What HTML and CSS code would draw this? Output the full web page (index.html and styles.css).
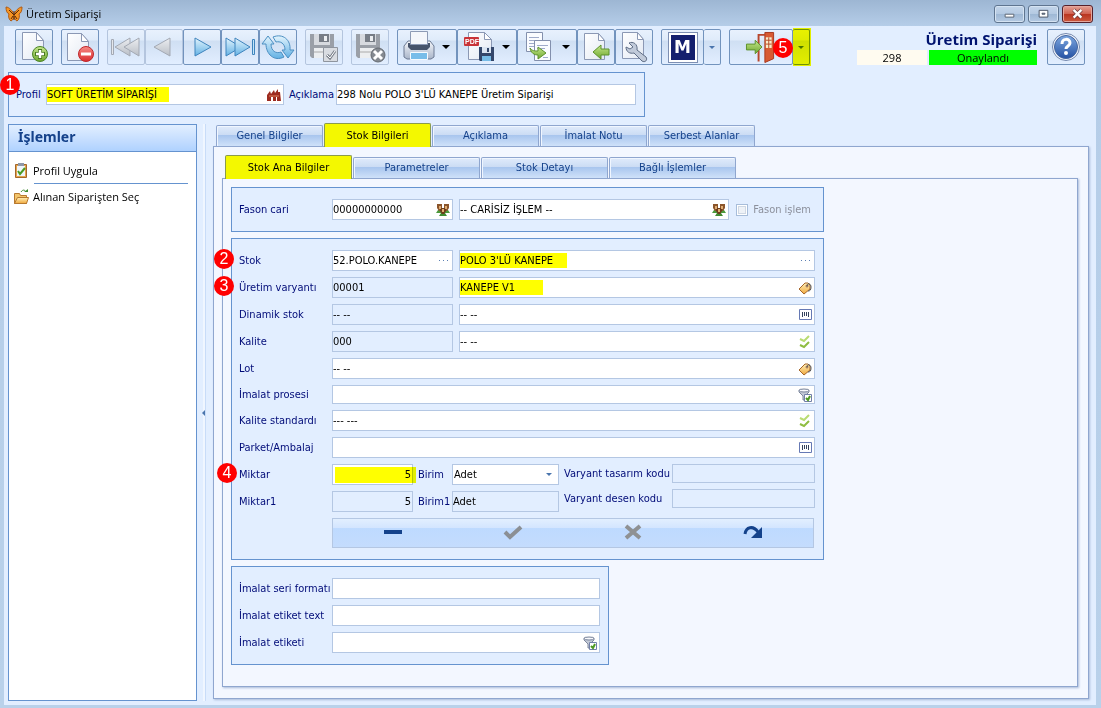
FILE: index.html
```html
<!DOCTYPE html>
<html lang="tr">
<head>
<meta charset="utf-8">
<title>Üretim Siparişi</title>
<link rel="stylesheet" href="styles.css">
</head>
<body>
<svg class="defs" aria-hidden="true">
  <defs>
    <linearGradient id="g-page" x1="0" y1="0" x2="1" y2="1"><stop offset="0" stop-color="#fff"/><stop offset="1" stop-color="#e3e9f3"/></linearGradient>
    <linearGradient id="g-blue" x1="0" y1="0" x2="0" y2="1"><stop offset="0" stop-color="#e3f4fd"/><stop offset="1" stop-color="#62b1e4"/></linearGradient>
    <linearGradient id="g-gray" x1="0" y1="0" x2="0" y2="1"><stop offset="0" stop-color="#eceef1"/><stop offset="1" stop-color="#b9bec6"/></linearGradient>
    <linearGradient id="g-green" x1="0" y1="0" x2="0" y2="1"><stop offset="0" stop-color="#c5e88b"/><stop offset="1" stop-color="#6da62f"/></linearGradient>
    <linearGradient id="g-red" x1="0" y1="0" x2="0" y2="1"><stop offset="0" stop-color="#f78a84"/><stop offset="1" stop-color="#d92c2f"/></linearGradient>
    <linearGradient id="g-help" x1="0" y1="0" x2="0" y2="1"><stop offset="0" stop-color="#7ea8e0"/><stop offset="1" stop-color="#2552a4"/></linearGradient>
    <linearGradient id="g-gold" x1="0" y1="0" x2="0" y2="1"><stop offset="0" stop-color="#fff0b8"/><stop offset="1" stop-color="#f0a83c"/></linearGradient>
    <linearGradient id="g-print" x1="0" y1="0" x2="0" y2="1"><stop offset="0" stop-color="#f5f7fb"/><stop offset="1" stop-color="#a9b5c9"/></linearGradient>
  </defs>
  <symbol id="people" viewBox="0 0 14 14"><path d="M0 10l2-3h3l1 3zM8 10l1-3h3l2 3z" fill="#4b9a3c"/><path d="M3 13l2-3h4l2 3z" fill="#3f8b32"/><path d="M1 1h5v4L5 8H3L1 5zM8 1h5v4l-2 3H9L8 5z" fill="#8b552b"/><path d="M4 5h6v3l-2 3H6L4 8z" fill="#6d3d1c"/><path d="M3 3h2v3H3zM9 3h2v3H9zM6 6h2v3H6z" fill="#e0ad72"/></symbol>
  <symbol id="tag" viewBox="0 0 14 14"><path d="M7 2h3l2 2v4l-6 5-5-5z" fill="url(#g-gold)" stroke="#a5662b"/><circle cx="9" cy="5" r="1" fill="#fff" stroke="#8a5a36"/><path d="M9 5c1-4 4-2 4 1s-1 4-3 4" fill="none" stroke="#555"/></symbol>
  <symbol id="barcode" viewBox="0 0 14 14"><path d="M1.500 1.500h12v10h-12z" fill="#fff" stroke="#6679b4"/><path d="M4.500 4v5M6.500 4v4M8.500 4v4M10.500 4v5" stroke="#34435c"/></symbol>
  <symbol id="checks" viewBox="0 0 14 14"><path d="M2 4l4 2 5-5" fill="none" stroke="#b9dc72" stroke-width="2"/><path d="M2 10l4 2 5-5" fill="none" stroke="#8fbd41" stroke-width="2"/></symbol>
  <symbol id="filter" viewBox="0 0 14 14"><path d="M1 2v2l4 4v4h2V8l4-4V2z" fill="#c3c9d6" stroke="#7d879d"/><ellipse cx="6" cy="2.500" rx="5" ry="1.500" fill="#f8f9fc" stroke="#78839a"/><path d="M6.500 6.500h7v7h-7z" fill="#fff" stroke="#7280a8"/><path d="M8 10l2 2 2-4" fill="none" stroke="#4f9a22" stroke-width="2"/></symbol>
</svg>

<div class="window">
  <header class="titlebar">
    <svg class="logo" viewBox="0 0 18 16"><path d="M9 9C8 5 4 1 1 1c0 4 1 6 3 7-1 2 0 6 2 7 2-1 3-3 3-5 0 2 1 4 3 5 2-1 3-5 2-7 2-1 3-3 3-7-3 0-7 4-8 8z" fill="#f59423" stroke="#b05a12"/><path d="M9 5v9M9 9L4 4M9 9l5-5M8 10l-2 3M10 10l2 3" stroke="#5a2b09"/></svg>
    <span class="caption">Üretim Siparişi</span>
    <div class="winbtns">
      <button class="winbtn" aria-label="Küçült"><svg viewBox="0 0 30 16"><path d="M10.500 8.500h9v3h-9z" fill="#fff" stroke="#5a6372"/></svg></button>
      <button class="winbtn" aria-label="Büyüt"><svg viewBox="0 0 30 16"><path d="M10.500 4.500h9v7h-9z" fill="#fff" stroke="#4b5566"/><path d="M13.500 7.500h3v1h-3z" fill="#b4c9e2" stroke="#4b5566"/></svg></button>
      <button class="winbtn close" aria-label="Kapat"><svg viewBox="0 0 30 16"><path d="M11 4l8 8M19 4l-8 8" stroke="#6b3a3a" stroke-width="4"/><path d="M11 4l8 8M19 4l-8 8" stroke="#fff" stroke-width="2.500"/></svg></button>
    </div>
  </header>

  <div class="client">
    <div class="toolbar">
      <button class="tool" aria-label="Yeni"><svg viewBox="0 0 36 34"><path d="M6.500 2.500h14l7 8v19h-21z" fill="url(#g-page)" stroke="#8b98b4"/><path d="M20.500 2.500v8h7z" fill="#fff" stroke="#8b98b4"/><circle cx="24" cy="24" r="7.500" fill="url(#g-green)" stroke="#4c8528"/><path d="M24 19v10M19 24h10" stroke="#48781f" stroke-width="4"/><path d="M24 20v8M20 24h8" stroke="#fff" stroke-width="2.500"/></svg></button>
      <button class="tool" aria-label="Sil"><svg viewBox="0 0 36 34"><path d="M5.500 3.500h14l7 8v19h-21z" fill="url(#g-page)" stroke="#8b98b4"/><path d="M19.500 3.500v8h7z" fill="#fff" stroke="#8b98b4"/><circle cx="24" cy="24" r="7.500" fill="url(#g-red)" stroke="#c0272b"/><path d="M19 24h10" stroke="#fff" stroke-width="3"/></svg></button>
      <div class="tools">
        <button class="tool off" aria-label="İlk" disabled><svg viewBox="0 0 36 34"><path d="M3.500 9.500h2v15h-2z" fill="#e4e7ec" stroke="#a3a9b4"/><path d="M22 8v18L7 17z" fill="url(#g-gray)" stroke="#a3a9b4"/><path d="M31 8v18L16 17z" fill="url(#g-gray)" stroke="#a3a9b4"/></svg></button>
        <button class="tool off" aria-label="Önceki" disabled><svg viewBox="0 0 36 34"><path d="M24 8v18L8 17z" fill="url(#g-gray)" stroke="#a3a9b4"/></svg></button>
        <button class="tool" aria-label="Sonraki"><svg viewBox="0 0 36 34"><path d="M11 8v18l16-9z" fill="url(#g-blue)" stroke="#3f84bd"/></svg></button>
        <button class="tool" aria-label="Son"><svg viewBox="0 0 36 34"><path d="M4 8v18l15-9z" fill="url(#g-blue)" stroke="#3f84bd"/><path d="M13 8v18l15-9z" fill="url(#g-blue)" stroke="#3f84bd"/><path d="M30.500 9.500h2v15h-2z" fill="#c5e5f8" stroke="#3f84bd"/></svg></button>
        <button class="tool" aria-label="Yenile"><svg viewBox="0 0 36 34"><path d="M2 14l6-8 6 8h-3c0 7 5 10 10 8l3 5C14 32 6 24 6 14z" fill="url(#g-blue)" stroke="#4c8fc2"/><path d="M34 20l-6 8-6-8h3c0-7-5-9-9-8l-3-5c10-4 18 3 17 13z" fill="url(#g-blue)" stroke="#4c8fc2"/></svg></button>
      </div>
      <button class="tool off" aria-label="Kaydet" disabled><svg viewBox="0 0 36 34"><path d="M4 4h24v24H6l-2-2z" fill="#9a9fa7"/><path d="M8 4h16v11H8z" fill="#d7dadf"/><path d="M13 4h10v8H13z" fill="#777d86"/><path d="M18 6h3v5h-3z" fill="#eceef0"/><path d="M8 18h16v10H8z" fill="#eceef0"/><path d="M8 22h16" stroke="#aaa"/><path d="M17.500 17.500h14v14h-14z" fill="#d9dce1" stroke="#8f959e"/><path d="M21 25l3 3 5-7" fill="none" stroke="#7c828c" stroke-width="3"/><path d="M21 25l3 3 5-7" fill="none" stroke="#fff"/></svg></button>
      <button class="tool off" aria-label="İptal" disabled><svg viewBox="0 0 36 34"><path d="M4 4h24v24H6l-2-2z" fill="#9a9fa7"/><path d="M8 4h16v11H8z" fill="#d7dadf"/><path d="M13 4h10v8H13z" fill="#777d86"/><path d="M18 6h3v5h-3z" fill="#eceef0"/><path d="M8 18h16v10H8z" fill="#eceef0"/><path d="M8 22h16" stroke="#aaa"/><circle cx="26" cy="25" r="7" fill="#858a91" stroke="#666b73"/><path d="M22 21l8 8M30 21l-8 8" stroke="#fff" stroke-width="3"/></svg></button>
      <div class="tools">
        <button class="tool wide" aria-label="Yazdır"><svg viewBox="0 0 36 34"><path d="M3 16l4-5h22l4 5v11l-3 2H6l-3-2z" fill="url(#g-print)" stroke="#6c7a94"/><path d="M7 13h22v4l-3 3H10l-3-3z" fill="#46536b"/><path d="M9.500 1.500h17v13h-17z" fill="#f4f6fb" stroke="#8d9ab5"/><path d="M9.500 22.500h17v7h-17z" fill="#78bde9" stroke="#f5faff"/></svg><i class="caret"></i></button>
        <button class="tool wide" aria-label="PDF kaydet"><svg viewBox="0 0 36 34"><path d="M7.500 2.500h16l7 7v20h-23z" fill="url(#g-page)" stroke="#8b98b4"/><path d="M23.500 2.500v7h7z" fill="#fff" stroke="#8b98b4"/><rect x="3" y="7" width="15" height="9" rx="1" fill="#c93338"/><text x="4" y="14" class="pdf">PDF</text><path d="M18 17h15v14H19l-1-1z" fill="#34476b"/><path d="M21 17h9v6h-9z" fill="#dbe5f2"/><path d="M26 18h2v4h-2z" fill="#34476b"/><path d="M21 26h9v5h-9z" fill="#77bce7"/></svg><i class="caret"></i></button>
        <button class="tool wide" aria-label="Kopyala"><svg viewBox="0 0 36 34"><path d="M5.500 2.500h16v19h-16z" fill="#fafcff" stroke="#8390ad"/><path d="M8 7.500h10M8 10.500h10M8 13.500h8M8 16.500h8" stroke="#9fabca"/><path d="M13.500 10.500h16v20h-16z" fill="#fafcff" stroke="#8390ad"/><path d="M16 15.500h11M16 18.500h8M22 27.500h5" stroke="#9fabca"/><path d="M9 18c2 3 5 3 8 3v-4l8 6-8 6v-4c-4 0-7-2-8-7z" fill="url(#g-green)" stroke="#5c922c"/></svg><i class="caret"></i></button>
        <button class="tool" aria-label="Aktar"><svg viewBox="0 0 36 34"><path d="M6.500 3.500h14l6 7v19h-20z" fill="url(#g-page)" stroke="#8b98b4"/><path d="M20.500 3.500v7h6z" fill="#fff" stroke="#8b98b4"/><path d="M15 22l8-7v4h8v6h-8v4z" fill="url(#g-green)" stroke="#5c922c"/></svg></button>
        <button class="tool" aria-label="Ayarlar"><svg viewBox="0 0 36 34"><path d="M6.500 2.500h15l6 7v19h-21z" fill="url(#g-page)" stroke="#8b98b4"/><path d="M21.500 2.500v7h6z" fill="#fff" stroke="#8b98b4"/><path d="M13 13c4-2 9 1 8 7l9 7c2 3-1 6-4 4l-8-8c-4 1-8-1-8-6l4 2 3-2z" fill="#c1cad9" stroke="#5f6d85"/></svg></button>
      </div>
      <div class="tools split">
        <button class="tool m" aria-label="M"><span>M</span></button>
        <button class="drop" aria-label="M seçenekleri"><i class="caret small"></i></button>
      </div>
      <div class="tools split">
        <button class="tool exit" aria-label="Çıkış"><svg viewBox="0 0 64 34"><path d="M29.500 32V4.500H36" fill="none" stroke="#b8462c" stroke-width="2"/><path d="M36 2h9v27l-9 4z" fill="#d85a32" stroke="#a7381e"/><path d="M37 7h6v11h-6z" fill="#f9eccb"/><path d="M40 7v11M37 10h6M37 14h6" stroke="#b54b2a"/><path d="M17 14h9v-4l7 7-7 7v-4h-9z" fill="url(#g-green)" stroke="#5c922c"/></svg></button>
        <button class="drop" aria-label="Çıkış seçenekleri"><i class="caret small"></i></button>
        <span class="glow"></span>
        <b class="pin pin5">5</b>
      </div>
      <div class="status">
        <h1>Üretim Siparişi</h1>
        <div class="state"><span class="no">298</span><span class="ok">Onaylandı</span></div>
      </div>
      <button class="tool" aria-label="Yardım"><svg viewBox="0 0 36 34"><circle cx="18" cy="17" r="13.500" fill="#f2f6fc" stroke="#7488ae"/><circle cx="18" cy="17" r="11.500" fill="url(#g-help)" stroke="#44659f"/><path d="M14 14c0-6 8-6 8-1 0 3-4 3-4 6" fill="none" stroke="#fff" stroke-width="3"/><circle cx="18" cy="23" r="2" fill="#fff"/></svg></button>
    </div>

    <section class="box profile">
      <b class="pin pin1">1</b>
      <label for="profil">Profil</label>
      <div class="field fprofil"><input id="profil" class="mark mark-a" value="SOFT ÜRETİM SİPARİŞİ"><button aria-label="Profil seç"><svg viewBox="0 0 14 14"><path d="M0 13V7l3-4 1 3 3-4 1 3 3-4v3h2l1 9h-4v-4H9v4H6V9H4v4z" fill="#9d2b20"/><path d="M2 7h10v2H2z" fill="#c0573f"/></svg></button></div>
      <label for="acik" class="lacik">Açıklama</label>
      <div class="field facik"><input id="acik" value="298 Nolu POLO 3'LÜ KANEPE Üretim Siparişi"></div>
    </section>

    <div class="body">
      <aside class="side">
        <h2>İşlemler</h2>
        <a href="#"><svg viewBox="0 0 16 16"><path d="M2.500 1.500h11v13h-11z" fill="#e6a34b" stroke="#a3672a"/><path d="M4 3h8v10H4z" fill="#eef5fb"/><path d="M5 0h6v3H5z" fill="#8f98a8"/><path d="M5 8l2 3 5-6" fill="none" stroke="#4b9b24" stroke-width="2"/></svg><span>Profil Uygula</span></a>
        <hr>
        <a href="#"><svg viewBox="0 0 16 16"><path d="M1.500 14.500v-10h5l1 2h6v8z" fill="#f3c56b" stroke="#b7792f"/><path d="M1.500 14.500l3-6h11l-2 6z" fill="url(#g-gold)" stroke="#b7792f"/><path d="M8 3c2-3 4-2 5 0" fill="none" stroke="#3f8b32"/><path d="M11 3h4v-3z" fill="#3f8b32"/></svg><span>Alınan Siparişten Seç</span></a>
      </aside>
      <div class="splitter"><i></i></div>

      <main class="main">
        <nav class="tabs outer">
          <button>Genel Bilgiler</button><button class="on">Stok Bilgileri</button><button>Açıklama</button><button>İmalat Notu</button><button>Serbest Alanlar</button>
        </nav>
        <div class="pane">
          <nav class="tabs inner">
            <button class="on">Stok Ana Bilgiler</button><button>Parametreler</button><button>Stok Detayı</button><button>Bağlı İşlemler</button>
          </nav>
          <div class="pane sub">
            <section class="box form">
              <div class="row">
                <label for="fc">Fason cari</label>
                <div class="field code"><input id="fc" value="00000000000"><button aria-label="Cari seç"><svg><use href="#people"/></svg></button></div>
                <div class="field grow"><input aria-label="Cari adı" value="-- CARİSİZ İŞLEM --"><button aria-label="Cari seç"><svg><use href="#people"/></svg></button></div>
                <label class="check"><input type="checkbox" disabled>Fason işlem</label>
              </div>
            </section>

            <section class="box form">
              <div class="row">
                <b class="pin pin-row">2</b>
                <label for="stok">Stok</label>
                <div class="field code"><input id="stok" value="52.POLO.KANEPE"><button aria-label="Stok seç"><i class="dots"></i></button></div>
                <div class="field grow"><input class="mark mark-b" aria-label="Stok adı" value="POLO 3'LÜ KANEPE"><button aria-label="Stok seç"><i class="dots"></i></button></div>
              </div>
              <div class="row">
                <b class="pin pin-row">3</b>
                <label for="uv">Üretim varyantı</label>
                <div class="field code ro"><input id="uv" value="00001" readonly></div>
                <div class="field grow"><input class="mark mark-c" aria-label="Varyant adı" value="KANEPE V1"><button aria-label="Varyant seç"><svg><use href="#tag"/></svg></button></div>
              </div>
              <div class="row">
                <label for="ds">Dinamik stok</label>
                <div class="field code ro"><input id="ds" value="-- --" readonly></div>
                <div class="field grow"><input aria-label="Dinamik stok adı" value="-- --"><button aria-label="Seç"><svg><use href="#barcode"/></svg></button></div>
              </div>
              <div class="row">
                <label for="kal">Kalite</label>
                <div class="field code ro"><input id="kal" value="000" readonly></div>
                <div class="field grow"><input aria-label="Kalite adı" value="-- --"><button aria-label="Seç"><svg><use href="#checks"/></svg></button></div>
              </div>
              <div class="row">
                <label for="lot">Lot</label>
                <div class="field grow"><input id="lot" value="-- --"><button aria-label="Seç"><svg><use href="#tag"/></svg></button></div>
              </div>
              <div class="row">
                <label for="ip">İmalat prosesi</label>
                <div class="field grow short"><input id="ip"><button aria-label="Seç"><svg><use href="#filter"/></svg></button></div>
              </div>
              <div class="row">
                <label for="ks">Kalite standardı</label>
                <div class="field grow"><input id="ks" value="--- ---"><button aria-label="Seç"><svg><use href="#checks"/></svg></button></div>
              </div>
              <div class="row">
                <label for="pa">Parket/Ambalaj</label>
                <div class="field grow"><input id="pa"><button aria-label="Seç"><svg><use href="#barcode"/></svg></button></div>
              </div>
              <div class="amounts">
                <div class="col">
                  <div class="row">
                    <b class="pin pin-row pin4">4</b>
                    <label for="mik">Miktar</label>
                    <div class="field qty"><input id="mik" value="5"><span class="glow"></span></div>
                    <label for="bir" class="unit">Birim</label>
                    <div class="field sel"><select id="bir"><option>Adet</option></select><i class="caret small"></i></div>
                  </div>
                  <div class="row">
                    <label for="mik1">Miktar1</label>
                    <div class="field qty ro"><input id="mik1" value="5" readonly></div>
                    <label for="bir1" class="unit">Birim1</label>
                    <div class="field sel ro"><input id="bir1" value="Adet" readonly></div>
                  </div>
                </div>
                <div class="col variants">
                  <div class="row"><label for="vt">Varyant tasarım kodu</label><div class="field grow ro short"><input id="vt" readonly></div></div>
                  <div class="row"><label for="vd">Varyant desen kodu</label><div class="field grow ro short"><input id="vd" readonly></div></div>
                </div>
              </div>
              <div class="actions">
                <button aria-label="Sil"><svg viewBox="0 0 20 16"><path d="M1 6h18v4H1z" fill="#14428b"/></svg></button>
                <button aria-label="Onayla"><svg viewBox="0 0 20 16"><path d="M2 8l5 5L18 3" fill="none" stroke="#8b8f94" stroke-width="4"/></svg></button>
                <button aria-label="Vazgeç"><svg viewBox="0 0 20 16"><path d="M3 2l14 12M17 2L3 14" stroke="#8f9193" stroke-width="4"/></svg></button>
                <button aria-label="Yinele"><svg viewBox="0 0 20 16"><path d="M2 10C3 3 10 1 15 8" fill="none" stroke="#14428b" stroke-width="3"/><path d="M19 3v11H8z" fill="#14428b"/></svg></button>
              </div>
            </section>

            <section class="box form labels">
              <div class="row"><label for="sf">İmalat seri formatı</label><div class="field grow"><input id="sf"></div></div>
              <div class="row"><label for="et">İmalat etiket text</label><div class="field grow"><input id="et"></div></div>
              <div class="row"><label for="ie">İmalat etiketi</label><div class="field grow"><input id="ie"><button aria-label="Seç"><svg><use href="#filter"/></svg></button></div></div>
            </section>
          </div>
        </div>
      </main>
    </div>
  </div>
</div>
</body>
</html>
```
FILE: styles.css
```css
* { box-sizing: border-box; }
body { margin: 0; font: 11px/14px "DejaVu Sans Condensed", "Noto Sans", sans-serif; color: #000; }
button, input, select { font: inherit; color: inherit; margin: 0; padding: 0; border: 0; background: none; }
h1, h2 { margin: 0; }
svg { display: block; }
.defs { position: absolute; width: 0; height: 0; }

.window { display: flex; flex-direction: column; min-height: 100vh; padding: 0 5px 3px 4px; background: linear-gradient(#9db6d3, #b5cde8 26px, #b9d1ea); }
.titlebar { display: flex; align-items: center; gap: 3px; height: 26px; padding: 2px 3px 0 1px; }
.logo { width: 18px; height: 16px; }
.caption { flex: 1; font: 11px/16px "Open Sans", sans-serif; }
.winbtns { display: flex; gap: 3px; }
.winbtn { width: 31px; height: 18px; border: 1px solid #5f7590; border-radius: 3px; background: linear-gradient(#c3d5ea, #b4c9e2 50%, #9db7d4 50%, #b5cae3); box-shadow: inset 0 0 0 1px #d5e3f2; }
.winbtn.close { background: linear-gradient(#e3a297, #d0604f 50%, #b8331f 50%, #cd5a3f); border-color: #56202a; box-shadow: inset 0 0 0 1px #e5a79d; }

.client { flex: 1; display: flex; flex-direction: column; padding: 3px 7px 4px 4px; background: #e2eeff; }
.toolbar { display: flex; gap: 8px; padding: 0 4px 0 7px; }
.tools { display: flex; position: relative; }
.tool { display: flex; align-items: center; width: 38px; height: 36px; border: 1px solid #7293bd; border-radius: 2px; background: linear-gradient(#e8f1fd, #dfebfa 30%, #cfdff3 32%, #e2eeff); }
.tool svg { width: 36px; height: 34px; flex: none; }
.tool.off { border-color: #b4c5de; }
.tool.wide { width: 60px; }
.tool.wide svg { width: 42px; }
.caret { width: 0; height: 0; margin-left: 2px; border: 4px solid transparent; border-top-color: #000; border-bottom: 0; }
.caret.small { margin: 0; border-width: 3px 3px 0; border-top-color: #4a75ad; }
.pdf { font: bold 7px "Liberation Sans", sans-serif; fill: #fff; }
.tool.m { width: 43px; justify-content: center; }
.tool.m span { width: 30px; height: 31px; border: 1px solid #7d8fb3; background: #141f6e; box-shadow: inset 0 0 0 2px #fff; color: #fff; font: bold 17px/29px "DejaVu Sans", sans-serif; }
.tool.exit { width: 64px; }
.tool.exit svg { width: 62px; }
.drop { display: flex; align-items: center; justify-content: center; width: 17px; height: 36px; border: 1px solid #7293bd; border-left: 0; border-radius: 2px; background: linear-gradient(#e8f1fd, #dfebfa 30%, #cfdff3 32%, #e2eeff); }
.glow { position: absolute; background: #ff0; mix-blend-mode: multiply; pointer-events: none; }
.tools .glow { left: 64px; top: -1px; width: 18px; height: 38px; }
.status { margin-left: auto; display: flex; flex-direction: column; align-items: flex-end; }
.status + .tool { margin-left: 2px; }
.status h1 { font: bold 15px/21px "Open Sans", sans-serif; color: #00136f; }
.state { display: flex; gap: 2px; font: 11px/15px "Open Sans", sans-serif; text-align: center; }
.no { width: 70px; background: #fffbf0; }
.ok { width: 108px; background: #0f0; }

.box { border: 1px solid #6593cf; background: #e2eeff; }
.profile { position: relative; display: flex; align-items: center; align-self: flex-start; width: 637px; max-width: 100%; height: 45px; margin-top: 7px; padding: 0 8px 0 7px; color: #000b78; }
.profile > label { width: 30px; }
.profile > .lacik { width: 47px; margin-left: 5px; }
.fprofil { width: 238px; }
.facik { flex: 1; }
label { color: #000b78; white-space: nowrap; }
.field { position: relative; display: flex; align-items: center; height: 21px; border: 1px solid #b4c7e3; background: #fff; color: #000; }
.field input { flex: 1; min-width: 0; height: 15px; margin: 2px 0; outline: 0; }
.field button { width: 18px; flex: none; }
.field button svg { width: 14px; height: 14px; margin: auto; }
.dots { display: block; width: 9px; height: 1px; margin: auto; background: repeating-linear-gradient(90deg, #5c80b4 0, #5c80b4 1px, transparent 1px, transparent 4px); }
.field.ro { background: #e2eeff; }
.field.short { height: 19px; }
.grow { flex: 1; min-width: 0; }
.mark { background: linear-gradient(#ff0, #ff0) no-repeat; }
.mark-a { background-size: 122px 100%; }
.mark-b { background-size: 107px 100%; }
.mark-c { background-size: 83px 100%; }

.pin { position: absolute; z-index: 2; width: 20px; height: 20px; border-radius: 50%; background: #f00; color: #fff; font: 16px/20px "Liberation Sans", sans-serif; text-align: center; }
.pin1 { left: -9px; top: 2px; }
.pin5 { left: 44px; top: 9px; }
.pin-row { left: -25px; top: -1px; }
.pin4 { left: -22px; }

.body { flex: 1; display: flex; margin-top: 7px; }
.side { width: 189px; flex: none; border: 1px solid #6593cf; background: #fff; }
.side h2 { height: 27px; margin-bottom: 7px; padding-left: 9px; border-bottom: 1px solid #6593cf; background: linear-gradient(#e2efff, #c4ddff 60%, #afd2ff); color: #15428b; font: bold 14px/24px "Noto Sans", sans-serif; }
.side a { display: flex; align-items: center; gap: 4px; height: 24px; padding-left: 4px; color: #000; text-decoration: none; font: 11px/16px "Open Sans", sans-serif; }
.side a svg { width: 16px; height: 16px; }
.side hr { margin: 0 8px 1px 25px; border: 0; border-top: 1px solid #6593cf; }
.splitter { display: flex; align-items: center; width: 16px; flex: none; background: linear-gradient(90deg, #e2eeff 6px, #f0f6ff 6px, #f0f6ff 8px, #c8dcf8 8px, #c8dcf8 9px, #e2eeff 9px); }
.splitter i { margin-left: 5px; border: 3px solid transparent; border-right-color: #4a75ad; border-left: 0; }

.main { flex: 1; min-width: 0; display: flex; flex-direction: column; padding-bottom: 2px; }
.tabs { position: relative; display: flex; align-items: flex-end; gap: 1px; padding-left: 3px; }
.tabs button { height: 21px; border: 1px solid #8fa6cf; border-bottom: 0; border-radius: 2px 2px 0 0; background: linear-gradient(#e0ebfb, #cbdcf4 45%, #a9c6ee 47%, #cfe1f9); color: #15428b; box-shadow: inset 1px 1px #f0f6ff; }
.tabs .on { height: 24px; margin-bottom: -1px; border-color: #8a9a4e; background: #f4f800; color: #000; box-shadow: none; }
.outer { margin-top: -1px; }
.outer button { width: 107px; }
.inner button { width: 127px; }
.pane { flex: 1; display: flex; flex-direction: column; padding: 8px 10px 11px 8px; border: 1px solid #8fa6cf; background: #f3f7ff; box-shadow: 1px 1px 2px #a9bbd9; }
.pane.sub { gap: 6px; }

.form { display: flex; flex-direction: column; gap: 6px; width: 100%; max-width: 593px; padding: 11px 8px 11px 7px; }
.form.labels { max-width: 378px; }
.row { position: relative; display: flex; align-items: center; }
.row > label:first-of-type { width: 93px; flex: none; }
.code { width: 121px; margin-right: 6px; }
.row > .check { display: flex; align-items: center; gap: 5px; margin: 0 4px 0 7px; color: #8c909c; }
.check input { appearance: none; width: 12px; height: 12px; border: 1px solid #a7bdda; background: #eef2f7; box-shadow: inset 0 0 0 1px #fff, inset 0 0 0 2px #cfd8e4; }
.amounts { display: flex; gap: 5px; }
.col { display: flex; flex-direction: column; gap: 6px; }
.variants { flex: 1; }
.row > label.unit { width: 39px; padding-left: 5px; }
.variants .row > label { width: 108px; }
.qty { width: 81px; }
.qty input { text-align: right; padding-right: 1px; }
.qty .glow { left: 2px; top: 2px; width: 81px; height: 16px; }
.sel { width: 107px; }
.sel select { flex: 1; height: 19px; padding-left: 1px; appearance: none; }
.sel .caret { position: absolute; right: 6px; top: 8px; pointer-events: none; }
.actions { display: flex; height: 30px; margin-left: 93px; margin-right: 1px; border: 1px solid #b4c7e3; background: linear-gradient(#e2efff, #d3e5ff 32%, #bedaff 34%, #c4dcfd); }
.actions button { flex: 1; }
.actions svg { width: 20px; height: 16px; margin: 0 auto 2px; }
```
